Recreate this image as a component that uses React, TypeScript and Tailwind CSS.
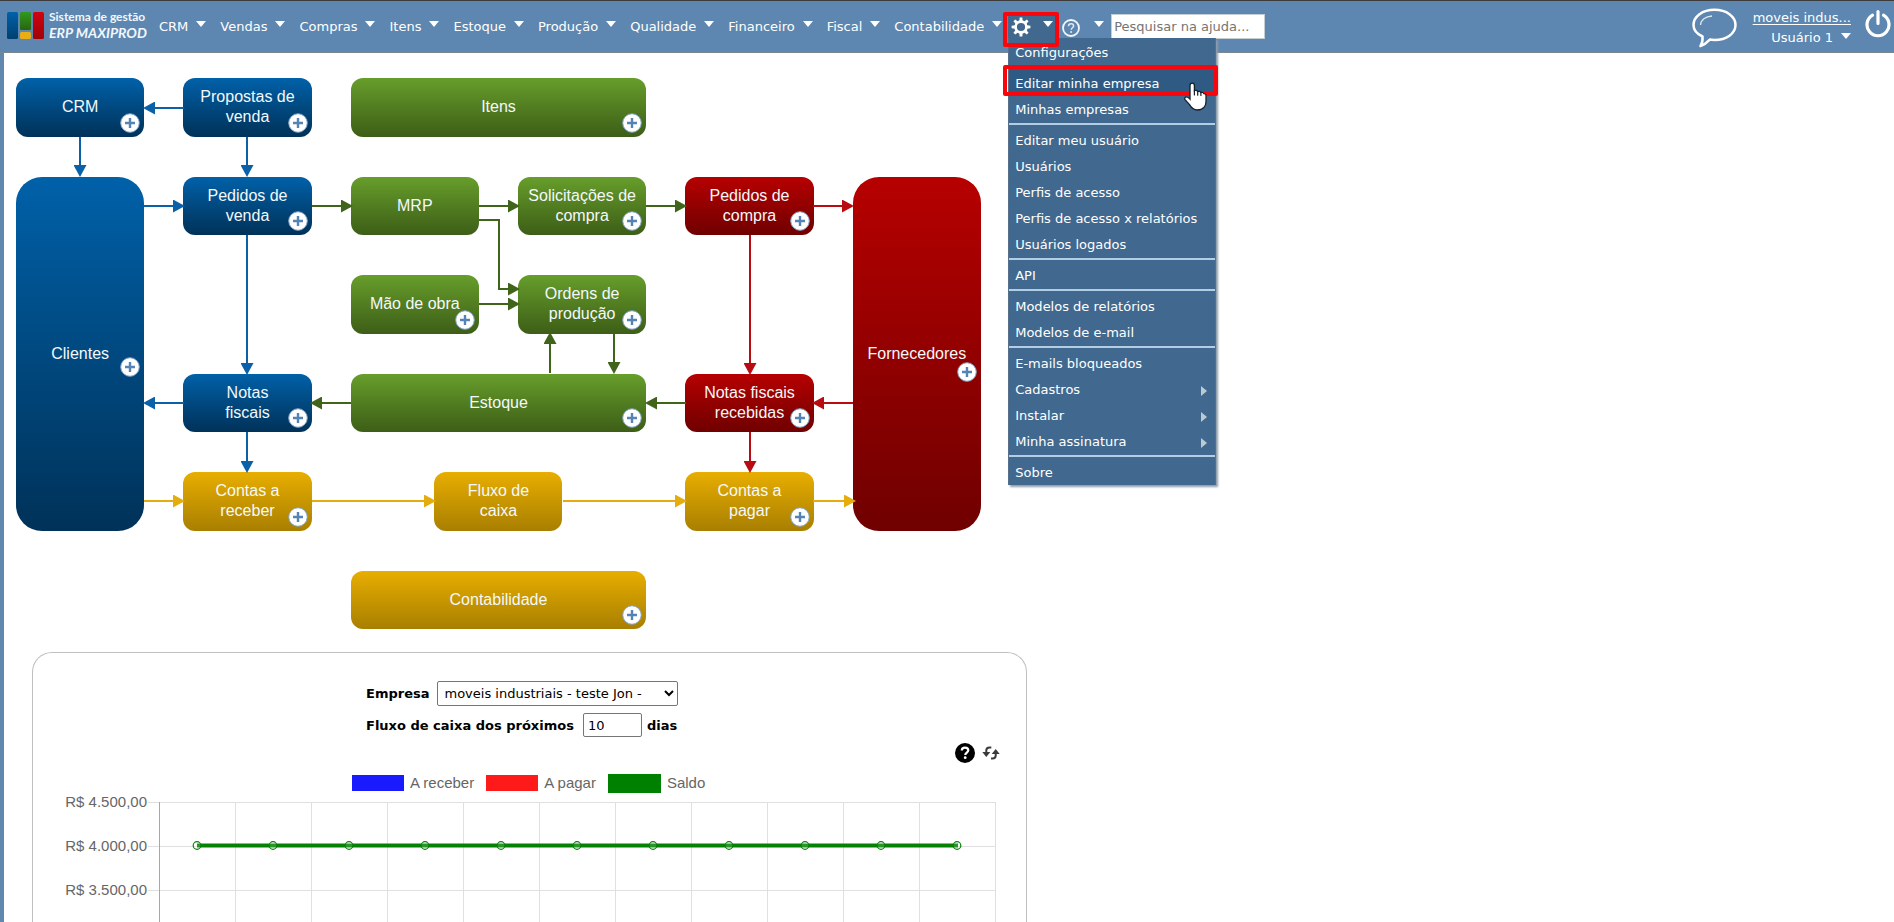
import { clsx } from 'clsx'

const navItems = ['CRM', 'Vendas', 'Compras', 'Itens', 'Estoque', 'Produção', 'Qualidade', 'Financeiro', 'Fiscal', 'Contabilidade']

const menuGroups = [
  [{ label: 'Configurações' }],
  [{ label: 'Editar minha empresa', active: true }, { label: 'Minhas empresas' }],
  [
    { label: 'Editar meu usuário' },
    { label: 'Usuários' },
    { label: 'Perfis de acesso' },
    { label: 'Perfis de acesso x relatórios' },
    { label: 'Usuários logados' },
  ],
  [{ label: 'API' }],
  [{ label: 'Modelos de relatórios' }, { label: 'Modelos de e-mail' }],
  [
    { label: 'E-mails bloqueados' },
    { label: 'Cadastros', sub: true },
    { label: 'Instalar', sub: true },
    { label: 'Minha assinatura', sub: true },
  ],
  [{ label: 'Sobre' }],
] as { label: string; active?: boolean; sub?: boolean }[][]

const colors = {
  blue: 'bg-linear-to-b from-[#0061a9] to-[#003259]',
  green: 'bg-linear-to-b from-[#679e2b] to-[#3d5e17]',
  red: 'bg-linear-to-b from-[#b70000] to-[#700000]',
  yellow: 'bg-linear-to-b from-[#e8ae00] to-[#a87f00]',
}

type FlowNode = {
  lines: string[]
  color: keyof typeof colors
  place: string
  plus?: string
}

const corner = 'right-1 bottom-1'

const nodes: FlowNode[] = [
  { lines: ['CRM'], color: 'blue', place: 'col-start-1 row-start-1 rounded-xl', plus: corner },
  { lines: ['Propostas de', 'venda'], color: 'blue', place: 'col-start-2 row-start-1 rounded-xl', plus: corner },
  { lines: ['Itens'], color: 'green', place: 'col-start-3 col-span-2 row-start-1 rounded-xl', plus: corner },
  { lines: ['Clientes'], color: 'blue', place: 'col-start-1 row-start-2 row-span-4 rounded-[26px]', plus: 'right-1 top-[180px]' },
  { lines: ['Pedidos de', 'venda'], color: 'blue', place: 'col-start-2 row-start-2 rounded-xl', plus: corner },
  { lines: ['MRP'], color: 'green', place: 'col-start-3 row-start-2 rounded-xl' },
  { lines: ['Solicitações de', 'compra'], color: 'green', place: 'col-start-4 row-start-2 rounded-xl', plus: corner },
  { lines: ['Pedidos de', 'compra'], color: 'red', place: 'col-start-5 row-start-2 rounded-xl', plus: corner },
  { lines: ['Fornecedores'], color: 'red', place: 'col-start-6 row-start-2 row-span-4 rounded-[26px]', plus: 'right-1 top-[185px]' },
  { lines: ['Mão de obra'], color: 'green', place: 'col-start-3 row-start-3 rounded-xl', plus: corner },
  { lines: ['Ordens de', 'produção'], color: 'green', place: 'col-start-4 row-start-3 rounded-xl', plus: corner },
  { lines: ['Notas', 'fiscais'], color: 'blue', place: 'col-start-2 row-start-4 rounded-xl', plus: corner },
  { lines: ['Estoque'], color: 'green', place: 'col-start-3 col-span-2 row-start-4 rounded-xl', plus: corner },
  { lines: ['Notas fiscais', 'recebidas'], color: 'red', place: 'col-start-5 row-start-4 rounded-xl', plus: corner },
  { lines: ['Contas a', 'receber'], color: 'yellow', place: 'col-start-2 row-start-5 rounded-xl', plus: corner },
  { lines: ['Fluxo de', 'caixa'], color: 'yellow', place: 'col-start-3 col-span-2 row-start-5 w-32 justify-self-center rounded-xl' },
  { lines: ['Contas a', 'pagar'], color: 'yellow', place: 'col-start-5 row-start-5 rounded-xl', plus: corner },
  { lines: ['Contabilidade'], color: 'yellow', place: 'col-start-3 col-span-2 row-start-6 rounded-xl', plus: corner },
]

const arrowColors = { blue: '#0b61a8', green: '#41641b', red: '#b90b12', yellow: '#e5ac0e' }

// x/y of the path relative to the flow grid, the tip is the last point
const arrows: [keyof typeof arrowColors, string][] = [
  ['blue', 'M168 30H139'],
  ['blue', 'M64 59V87'],
  ['blue', 'M231 59V87'],
  ['blue', 'M128 128H157'],
  ['blue', 'M231 157V285'],
  ['blue', 'M168 325H139'],
  ['blue', 'M231 354V383'],
  ['green', 'M296 128H325'],
  ['green', 'M463 128H492'],
  ['green', 'M463 142H483V211H492'],
  ['green', 'M463 226H492'],
  ['green', 'M534 295V266'],
  ['green', 'M598 255V284'],
  ['green', 'M630 128H659'],
  ['green', 'M670 325H641'],
  ['green', 'M335 325H306'],
  ['red', 'M797 128H826'],
  ['red', 'M734 157V285'],
  ['red', 'M837 325H808'],
  ['red', 'M734 354V383'],
  ['yellow', 'M128 423H157'],
  ['yellow', 'M296 423H408'],
  ['yellow', 'M547 423H659'],
  ['yellow', 'M797 423H828'],
]

function Caret() {
  return (
    <svg className="w-[10px] h-[6px] shrink-0 -mt-1" viewBox="0 0 10 6" aria-hidden="true">
      <path d="M0 0h10L5 6z" fill="#fff" />
    </svg>
  )
}

function Logo() {
  return (
    <a href="#" className="flex items-start gap-[5px] text-[#f1f7fd]">
      <svg className="w-[37px] h-7" viewBox="0 0 37 28" aria-hidden="true">
        <defs>
          <linearGradient id="lb" x2="0" y2="1"><stop stopColor="#0061a9" /><stop offset="1" stopColor="#00406f" /></linearGradient>
          <linearGradient id="lg" x2="0" y2="1"><stop stopColor="#2f9a1c" /><stop offset="1" stopColor="#2a6313" /></linearGradient>
          <linearGradient id="lr" x2="0" y2="1"><stop stopColor="#cf0510" /><stop offset="1" stopColor="#a00008" /></linearGradient>
        </defs>
        <rect x="0" y="0" width="11" height="27" rx="1.5" fill="url(#lb)" />
        <rect x="13" y="0" width="11" height="18" rx="1.5" fill="url(#lg)" />
        <rect x="13" y="20" width="11" height="7" rx="1.5" fill="#e8ae14" />
        <rect x="26" y="0" width="11" height="27" rx="1.5" fill="url(#lr)" />
      </svg>
      <span className="w-[97px] -mt-[3px] font-['Lato'] font-bold whitespace-nowrap">
        <span className="block text-[12px] leading-4">Sistema de gestão</span>
        <span className="block text-[14px] leading-4 italic">ERP MAXIPROD</span>
      </span>
    </a>
  )
}

function Gear() {
  return (
    <svg className="size-5 shrink-0 mt-[3px]" viewBox="0 0 20 20" aria-hidden="true">
      <g fill="#fff">
        {[0, 45, 90, 135, 180, 225, 270, 315].map((a) => (
          <path key={a} d="M8.3 4.2 8.7 0.6h2.6l.4 3.6z" transform={`rotate(${a} 10 10)`} />
        ))}
      </g>
      <circle cx="10" cy="10" r="5.4" fill="none" stroke="#fff" strokeWidth="2.6" />
    </svg>
  )
}

function SettingsMenu() {
  return (
    <div className="absolute left-0 top-full z-20 w-52 pb-px bg-[#41698f] border-x border-[#56708c] shadow-[2px_2px_2px_#8c9cab]">
      {menuGroups.map((group, i) => (
        <div key={i} className={clsx(i > 0 && 'mt-[2px] border-t-2 border-[#b3cde4] pt-px')}>
          {group.map((item) => (
            <a
              key={item.label}
              href="#"
              className={clsx('relative flex items-center justify-between h-[26px] pt-[3px] pl-[6px] pr-2 whitespace-nowrap', item.active && 'bg-[#2f5a84]')}
            >
              {item.label}
              {item.sub && (
                <svg className="w-[6px] h-[10px] mt-[2px]" viewBox="0 0 6 10" aria-hidden="true">
                  <path d="M0 0v10l6-5z" fill="#bccad4" />
                </svg>
              )}
              {item.active && (
                <>
                  <span className="absolute -left-[6px] -right-[3px] -top-1 h-[31px] border-4 border-[#f8060c] rounded-[2px]" />
                  <svg className="absolute left-[175px] top-[13px] w-[23px] h-[29px]" viewBox="0 0 23 29" aria-hidden="true">
                    <path
                      d="M8.2 1.2c1.300 0 2.200.9 2.200 2.200v5.200c.7-.5 2.800-.3 3.300 1 .9-.6 2.700-.3 3.200 1 1-.5 2.400-.1 2.900 1 1.300-.1 2.200.8 2.200 2.200v6c0 3.900-2.700 8.200-8.600 8.200-4.600 0-6.300-2.600-7.900-5.400L1 17.700c-.8-1.400.2-2.900 1.600-2.900 1.400 0 2.400 1.200 3.400 2.400V3.400c0-1.300.9-2.200 2.200-2.200z"
                      fill="#fff"
                      stroke="#15202c"
                      strokeWidth="1.300"
                    />
                    <path d="M10.400 8.500v4.500M13.700 9.600v3.600M16.900 10.600v2.800" stroke="#15202c" strokeWidth="1.200" strokeLinecap="round" />
                  </svg>
                </>
              )}
            </a>
          ))}
        </div>
      ))}
    </div>
  )
}

function Header() {
  return (
    <header className="flex items-start h-[53px] shrink-0 pl-[7px] bg-[#5d87b0] border-t border-t-[#3c3c3c] border-b border-b-[#7d8790] text-white text-[13px] leading-4">
      <div className="pt-[11px]">
        <Logo />
      </div>
      <nav className="flex ml-[13px]">
        {navItems.map((item) => (
          <a key={item} href="#" className="flex items-center gap-2 h-[50px] mr-[14px]">
            <span className="pt-[2px]">{item}</span>
            <Caret />
          </a>
        ))}
        <div className="relative -ml-2 mr-[6px] h-[37px] w-12">
          <button type="button" aria-label="Configurações" className="flex items-center justify-between w-12 h-[25px] mt-3 px-[3px] bg-[#41698f]">
            <Gear />
            <Caret />
          </button>
          <SettingsMenu />
          <span className="absolute z-30 -left-[5px] top-[11px] w-14 h-[35px] border-4 border-[#f8060c] rounded-[2px]" />
        </div>
        <button type="button" aria-label="Ajuda" className="flex items-center gap-[14px] h-[52px] pt-px">
          <svg className="size-[18px]" viewBox="0 0 18 18" aria-hidden="true">
            <circle cx="9" cy="9" r="8" fill="none" stroke="#f1f6fb" strokeWidth="1.800" />
            <path d="M6.500 7.200c0-1.500 1.100-2.400 2.600-2.400s2.500.9 2.500 2.200c0 1.700-2.400 1.900-2.400 3.700" fill="none" stroke="#dfeaf5" strokeWidth="1.500" />
            <circle cx="9.100" cy="12.900" r="1" fill="#dfeaf5" />
          </svg>
          <span className="-mt-1">
            <Caret />
          </span>
        </button>
      </nav>
      <input
        aria-label="Pesquisar na ajuda"
        placeholder="Pesquisar na ajuda..."
        className="ml-[7px] mt-[13px] w-[154px] h-[25px] px-[2px] bg-white border border-[#c5cdd5] text-black placeholder:text-[#757575] outline-none"
      />
      <div className="flex ml-auto">
        <svg className="w-[45px] h-10 mt-[7px]" viewBox="0 0 45 40" fill="none" stroke="#fff" aria-hidden="true">
          <path d="M10.500 28.500C5 26 1.500 22 1.500 17 1.500 8.500 10.500 1.800 22.500 1.800S43.500 8.500 43.500 17 34.500 32 22.500 32c-1.800 0-3.200-.1-4.700-.4-2.800 3-5.800 5.200-9.300 6.400 2-3 2.400-6 2-9.500z" strokeWidth="2.500" strokeLinejoin="round" />
          <path d="M8.500 17c.3-5 5-8.500 11.500-9" strokeWidth="1.300" stroke="#dbe8f4" />
        </svg>
        <div className="flex flex-col items-end ml-4 pt-[7px]">
          <a href="#" className="underline underline-offset-2 leading-5">moveis indus...</a>
          <button type="button" className="flex items-center gap-2 leading-5">
            Usuário 1
            <Caret />
          </button>
        </div>
        <button type="button" aria-label="Sair" className="ml-[14px] mr-[3px] mt-2 self-start">
          <svg className="w-[26px] h-[30px]" viewBox="0 0 26 30" fill="none" stroke="#fff" strokeWidth="3.200" strokeLinecap="round" aria-hidden="true">
            <path d="M13 2.500v12M7.500 6.200a11 11 0 1 0 11 0" />
          </svg>
        </button>
      </div>
    </header>
  )
}

function Flow() {
  return (
    <div className="relative w-[965px] h-[551px] ml-3 mt-[25px] grid grid-cols-6 grid-rows-6 gap-x-[39px] gap-y-10 font-['Liberation_Sans',sans-serif] text-base leading-5 text-[#f4f8fb]">
      {nodes.map((node) => (
        <div key={node.lines.join(' ')} className={clsx('relative flex items-center justify-center text-center', colors[node.color], node.place)}>
          <a href="#" className="whitespace-nowrap">
            {node.lines.map((line) => (
              <span key={line} className="block">{line}</span>
            ))}
          </a>
          {node.plus && (
            <button type="button" aria-label={`Novo em ${node.lines.join(' ')}`} className={clsx('absolute', node.plus)}>
              <svg className="size-5" viewBox="0 0 20 20">
                <circle cx="10" cy="10" r="9.300" fill="#fff" stroke="#7d9fc4" strokeWidth="1" />
                <path d="M10 5v10M5 10h10" stroke="#5584b4" strokeWidth="2.400" />
              </svg>
            </button>
          )}
        </div>
      ))}
      <svg className="absolute inset-0 size-full pointer-events-none" viewBox="0 0 965 551" aria-hidden="true">
        <defs>
          {Object.entries(arrowColors).map(([name, fill]) => (
            <marker key={name} id={`tip-${name}`} viewBox="0 0 12 13" refX="0" refY="6.500" markerWidth="12" markerHeight="13" markerUnits="userSpaceOnUse" orient="auto">
              <path d="M0 0v13l12-6.500z" fill={fill} />
            </marker>
          ))}
        </defs>
        {arrows.map(([name, d]) => (
          <path key={d} d={d} fill="none" stroke={arrowColors[name]} strokeWidth="2" markerEnd={`url(#tip-${name})`} />
        ))}
      </svg>
    </div>
  )
}

function Chart() {
  const cols = Array.from({ length: 12 }, (_, i) => 126 + i * 76)
  const rows = ['R$ 4.500,00', 'R$ 4.000,00', 'R$ 3.500,00']

  return (
    <svg className="block w-[992px] h-[180px]" viewBox="0 0 992 180" role="img" aria-label="Fluxo de caixa">
      {rows.map((label, i) => (
        <g key={label}>
          <path d={`M115 ${9.5 + i * 44}H963`} stroke="#e0e0e0" />
          <text x="114" y={14 + i * 44} textAnchor="end" fontSize="15" fill="#666" fontFamily="Liberation Sans, sans-serif">{label}</text>
        </g>
      ))}
      {cols.map((x, i) => (
        <path key={x} d={`M${x + 0.5} 9V180`} stroke={i === 0 ? '#a8a8a8' : '#e0e0e0'} />
      ))}
      <path d="M164 52.500H925" stroke="#058205" strokeWidth="4" />
      {cols.slice(0, 11).map((x) => (
        <circle key={x} cx={x + 38} cy="52.500" r="3.800" fill="#fff" fillOpacity="0.150" stroke="#058205" strokeWidth="1.200" />
      ))}
    </svg>
  )
}

function CashFlow() {
  return (
    <section className="w-[995px] ml-7 mt-[23px] border border-b-0 border-[#c0c0c0] rounded-t-[20px] text-[13px] text-black">
      <div className="pl-[333px] pt-[27px]">
        <div className="flex items-center h-[26px] gap-2">
          <label htmlFor="empresa" className="pt-[2px] font-bold">Empresa</label>
          <select id="empresa" className="w-[241px] h-[25px] px-[2px] bg-white border border-[#767676] rounded-[2px]">
            <option>moveis industriais - teste Jon -</option>
          </select>
        </div>
        <div className="flex items-center h-[26px] gap-[5px] mt-[6px] font-bold">
          <label htmlFor="dias" className="pt-[2px] mr-1">Fluxo de caixa dos próximos</label>
          <input id="dias" defaultValue="10" className="w-[59px] h-6 px-1 bg-white border border-[#767676] rounded-[2px] font-normal" />
          <span className="pt-[2px]">dias</span>
        </div>
      </div>
      <div className="flex items-center justify-end gap-[7px] h-[22px] mt-1 pr-[26px]">
        <button type="button" aria-label="Ajuda">
          <svg className="size-5" viewBox="0 0 20 20">
            <circle cx="10" cy="10" r="10" />
            <path d="M6.800 7.600c0-2 1.300-3 3.200-3 2 0 3.300 1.100 3.300 2.700 0 2.200-3 2.300-3 4.700" fill="none" stroke="#fff" strokeWidth="2.200" />
            <circle cx="10.200" cy="14.700" r="1.400" fill="#fff" />
          </svg>
        </button>
        <button type="button" aria-label="Atualizar">
          <svg className="w-[18px] h-[14px]" viewBox="0 0 18 14" fill="none" stroke="#3a3a3a" strokeWidth="2">
            <path d="M9.300 1.500H7.500Q4.300 1.500 4.300 4.500V7M9 12.500h1.500q3.200 0 3.200-3V7" />
            <path d="M.3 6h8l-4 5zM9.700 8h8l-4-5z" fill="#3a3a3a" stroke="none" />
          </svg>
        </button>
      </div>
      <ul className="flex items-center h-5 mt-[9px] pl-[319px] gap-3 font-['Liberation_Sans',sans-serif] text-[15px] text-[#666]">
        <li className="flex items-center gap-[6px]"><span className="w-[52px] h-4 bg-[#1a1aff]" />A receber</li>
        <li className="flex items-center gap-[6px]"><span className="w-[52px] h-4 bg-[#ff1a1a]" />A pagar</li>
        <li className="flex items-center gap-[6px]"><span className="w-[53px] h-[19px] bg-[#008000]" />Saldo</li>
      </ul>
      <Chart />
    </section>
  )
}

export default function App() {
  return (
    <div className="flex flex-col h-screen overflow-hidden bg-white font-['DejaVu_Sans',sans-serif]">
      <Header />
      <main className="grow border-l-4 border-[#6088ae]">
        <Flow />
        <CashFlow />
      </main>
    </div>
  )
}
